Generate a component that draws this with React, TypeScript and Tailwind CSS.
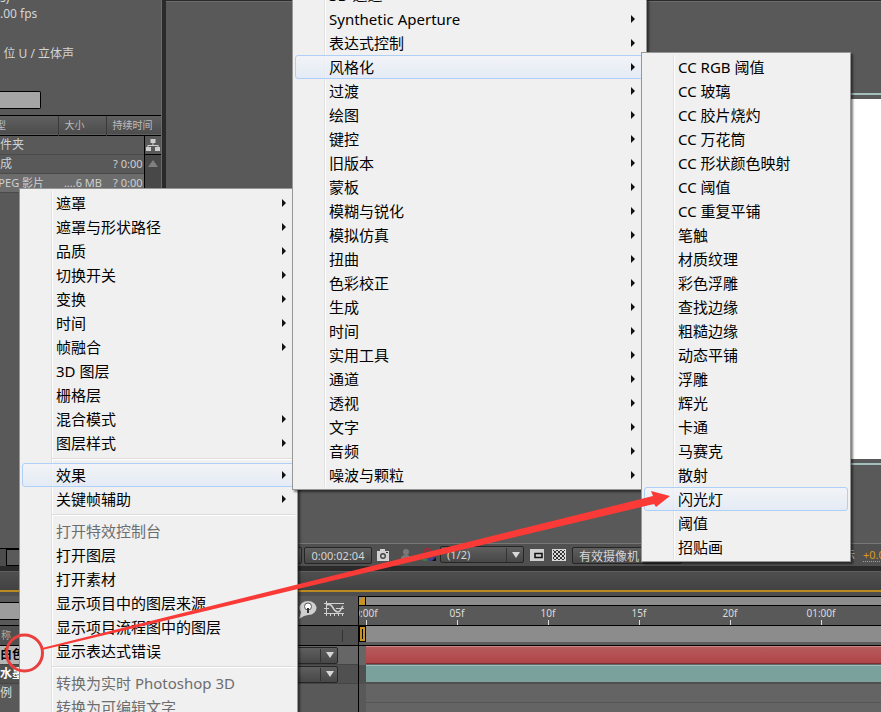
import type { ReactNode } from "react";

type TMenuEntry = {
  label?: string;
  sub?: boolean;
  active?: boolean;
  disabled?: boolean;
};

const layerMenu: TMenuEntry[] = [
  { label: "遮罩", sub: true },
  { label: "遮罩与形状路径", sub: true },
  { label: "品质", sub: true },
  { label: "切换开关", sub: true },
  { label: "变换", sub: true },
  { label: "时间", sub: true },
  { label: "帧融合", sub: true },
  { label: "3D 图层" },
  { label: "栅格层" },
  { label: "混合模式", sub: true },
  { label: "图层样式", sub: true },
  {},
  { label: "效果", sub: true, active: true },
  { label: "关键帧辅助", sub: true },
  {},
  { label: "打开特效控制台", disabled: true },
  { label: "打开图层" },
  { label: "打开素材" },
  { label: "显示项目中的图层来源" },
  { label: "显示项目流程图中的图层" },
  { label: "显示表达式错误" },
  {},
  { label: "转换为实时 Photoshop 3D", disabled: true },
  { label: "转换为可编辑文字", disabled: true },
];

const effectMenu: TMenuEntry[] = [
  "3D 通道",
  "Synthetic Aperture",
  "表达式控制",
  "风格化",
  "过渡",
  "绘图",
  "键控",
  "旧版本",
  "蒙板",
  "模糊与锐化",
  "模拟仿真",
  "扭曲",
  "色彩校正",
  "生成",
  "时间",
  "实用工具",
  "通道",
  "透视",
  "文字",
  "音频",
  "噪波与颗粒",
].map((label) => ({ label, sub: true, active: label === "风格化" }));

const stylizeMenu: TMenuEntry[] = [
  "CC RGB 阈值",
  "CC 玻璃",
  "CC 胶片烧灼",
  "CC 万花筒",
  "CC 形状颜色映射",
  "CC 阈值",
  "CC 重复平铺",
  "笔触",
  "材质纹理",
  "彩色浮雕",
  "查找边缘",
  "粗糙边缘",
  "动态平铺",
  "浮雕",
  "辉光",
  "卡通",
  "马赛克",
  "散射",
  "闪光灯",
  "阈值",
  "招贴画",
].map((label) => ({ label, active: label === "闪光灯" }));

const Menu = ({ name, items, className }: { name: string; items: TMenuEntry[]; className: string }) => {
  return (
    <div
      role="menu"
      aria-label={name}
      className={`absolute border border-[#979797] bg-[#f0f0f0] p-0.5 font-['Noto_Sans','Noto_Sans_CJK_SC',sans-serif] text-[15px] text-black shadow-[2px_2px_2px_rgba(0,0,0,0.5)] ${className}`}
    >
      {/* icon gutter line */}
      <div className="absolute inset-y-0.5 left-[31px] w-0.5 border-l border-[#e0e0e0] bg-white" />
      {items.map((item, i) =>
        item.label ? (
          <button
            key={i}
            role="menuitem"
            disabled={item.disabled}
            className={`relative flex h-6 w-full items-center justify-between rounded-[3px] border pr-2 pl-[33px] text-left leading-[22px] whitespace-nowrap disabled:text-[#6d6d6d] ${
              item.active
                ? "border-[#aecff7] bg-linear-to-b from-[#f2f4f8]/80 to-[#e2eaf6]/80"
                : "border-transparent"
            }`}
          >
            {item.label}
            {item.sub && (
              <svg className="h-2 w-1" viewBox="0 0 4 8" aria-hidden="true">
                <path d="M0 0L4 4L0 8Z" fill="#111" />
              </svg>
            )}
          </button>
        ) : (
          <div key={i} role="separator" className="flex h-2 items-center pl-[30px]">
            <div className="relative h-0.5 w-full border-t border-[#dcdcdc] bg-white" />
          </div>
        )
      )}
    </div>
  );
};

// text that runs out past the left edge of its cell
const Cut = ({ children, className }: { children: ReactNode; className: string }) => (
  <div className={`flex justify-end whitespace-nowrap ${className}`}>
    <span>{children}</span>
  </div>
);

const ProjectPanel = () => {
  return (
    <section className="flex w-[162px] shrink-0 flex-col overflow-hidden border-r border-[#6b6b6b] bg-[#595959]">
      <div className="h-[91px] shrink-0 text-[12px] leading-5 text-[#d4d4d4]">
        <div className="-mt-3 h-5">s)</div>
        <div className="-mt-1 h-5">.00 fps</div>
        <Cut className="mt-5 w-[74px]">位 U / 立体声</Cut>
      </div>
      <input
        aria-label="搜索"
        className="h-[18px] w-[41px] shrink-0 rounded-r-[2px] border border-l-0 border-black bg-[#a5a5a5]"
      />
      <div className="mt-1.5 flex border-t border-black">
        <table className="w-full table-fixed border-collapse text-[11px] leading-[18px] whitespace-nowrap text-[#d0d0d0]">
          <colgroup>
            <col className="w-[58px]" />
            <col className="w-12" />
            <col className="w-[38px]" />
            <col className="w-[17px]" />
          </colgroup>
          <thead>
            <tr className="h-[19px] border-b border-black bg-linear-to-b from-[#606060] to-[#4d4d4d] text-[10px] text-[#bdbdbd]">
              <th className="border-r border-[#3a3a3a] p-0 font-normal">
                <Cut className="w-1.5">型</Cut>
              </th>
              <th className="border-r border-[#3a3a3a] p-0 pl-1.5 text-left font-normal">大小</th>
              <th colSpan={2} className="p-0 pl-1.5 text-left font-normal">
                持续时间
              </th>
            </tr>
          </thead>
          <tbody>
            <tr className="h-[19px] border-b border-[#4a4a4a]">
              <td className="p-0 text-[12px]">
                <Cut className="w-6">件夹</Cut>
              </td>
              <td className="p-0" />
              <td className="p-0" />
              <td className="border-b border-l border-black p-0">
                <svg className="mx-auto h-3.5 w-3.5" viewBox="0 0 14 14" fill="#cfcfcf" aria-hidden="true">
                  <path d="M4.500 1h5v4h-2v2h5v2H14v4H9V9h2.500V8h-9v1H5v4H0V9h1.500V7h5V5h-2z" />
                </svg>
              </td>
            </tr>
            <tr className="h-[19px] border-b border-[#4a4a4a]">
              <td className="p-0 text-[12px]">
                <Cut className="w-3">成</Cut>
              </td>
              <td className="p-0" />
              <td className="p-0 pr-px text-right">? 0:00</td>
              <td rowSpan={2} className="border-l border-black bg-[#484848] p-0 pt-1 align-top">
                <svg className="mx-auto h-2 w-2.5" viewBox="0 0 10 8" aria-hidden="true">
                  <path d="M5 1L10 8H0Z" fill="#808080" />
                </svg>
              </td>
            </tr>
            <tr className="h-[19px] border-b border-[#4a4a4a] bg-[#6c6c6c]">
              <td className="p-0">
                <Cut className="w-11">PEG 影片</Cut>
              </td>
              <td className="p-0 pr-1 text-right">....6 MB</td>
              <td className="p-0 pr-px text-right">? 0:00</td>
            </tr>
          </tbody>
        </table>
      </div>
      <div className="mt-auto flex h-[18px] border-t border-black bg-[#4c4c4c]">
        <button aria-label="新建合成" className="ml-1.5 w-8 border border-black bg-[#5a5a5a]" />
      </div>
    </section>
  );
};

const barButton = "h-[17px] rounded-[2px] border border-[#262626] bg-linear-to-b from-[#5f5f5f] to-[#474747]";

const CompPanel = () => {
  return (
    <section className="flex min-w-0 flex-1 flex-col border-t border-[#2b2b2b] bg-[#595959]">
      <div className="h-[92px] shrink-0 border-t border-[#6b6b6b]" />
      <div className="ml-[300px] min-h-0 flex-1 border-y-2 border-[#a3bfbb] py-1">
        <div className="h-full bg-white" />
      </div>
      <div className="h-[78px] shrink-0" />
      <div className="flex h-[23px] shrink-0 items-center border-t border-[#777] bg-[#505050] pl-[126px] text-[11px] whitespace-nowrap text-[#d6d6d6]">
        <button aria-label="网格" className={`w-2.5 ${barButton}`} />
        <button className={`ml-0.5 w-[68px] ${barButton}`}>0:00:02:04</button>
        <button aria-label="快照" className="ml-1">
          <svg className="h-3.5 w-3.5" viewBox="0 0 14 14" aria-hidden="true">
            <path d="M1 3h3V1h5v2h4v10H1z" fill="#d2d2d2" />
            <circle cx="7" cy="8" r="3" fill="#444" />
            <circle cx="7" cy="8" r="1.6" fill="#d2d2d2" />
            <path d="M10 4h2v1h-2z" fill="#333" />
          </svg>
        </button>
        <svg className="ml-2.5 h-3.5 w-3" viewBox="0 0 12 14" fill="#797979" aria-hidden="true">
          <circle cx="6" cy="4" r="3" />
          <path d="M1 13V9l3-2h4l3 2v4z" />
        </svg>
        <svg className="ml-2 h-3.5 w-4" viewBox="0 0 16 14" fill="none" strokeWidth="2" aria-hidden="true">
          <circle cx="5" cy="9" r="3" stroke="#3f7a4a" />
          <circle cx="11" cy="9" r="3" stroke="#3c3c9c" />
          <circle cx="8" cy="5" r="4" stroke="#a02c38" />
          <path d="M12 13h4v-4z" fill="#111" />
        </svg>
        <div className="relative ml-1">
          <select aria-label="分辨率" className={`w-[84px] appearance-none pl-1.5 ${barButton}`}>
            <option>(1/2)</option>
          </select>
          <DownArrow />
        </div>
        <svg className="ml-1.5 h-3 w-3.5" viewBox="0 0 14 12" aria-hidden="true">
          <path d="M0 0h14v12H0z" fill="#cfcfcf" />
          <path d="M5 4.5h7v4H5z" fill="#cfcfcf" stroke="#111" strokeWidth="1.6" />
        </svg>
        <svg className="ml-2 h-3 w-3.5" viewBox="0 0 14 12" aria-hidden="true">
          <defs>
            <pattern id="checker" width="4" height="4" patternUnits="userSpaceOnUse">
              <path d="M0 0h2v2H0zM2 2h2v2H2z" fill="#333" />
            </pattern>
          </defs>
          <path d="M0 0h14v12H0z" fill="#d8d8d8" />
          <path d="M1 1h12v10H1z" fill="url(#checker)" />
        </svg>
        <select aria-label="视图" className={`ml-1.5 w-[110px] appearance-none pl-1.5 text-[12px] ${barButton}`}>
          <option>有效摄像机</option>
        </select>
        <span className="mr-2 ml-auto">显示</span>
        <a href="#exposure" className="w-[18px] shrink-0 text-[#d99b1c] underline decoration-dotted underline-offset-2">
          +0.0
        </a>
      </div>
    </section>
  );
};

const DownArrow = () => (
  <span className="pointer-events-none absolute inset-y-[2px] right-0 flex w-[18px] items-center justify-center border-l border-[#333]">
    <svg className="h-1.5 w-2" viewBox="0 0 8 6" aria-hidden="true">
      <path d="M0 0H8L4 6Z" fill="#d8d8d8" />
    </svg>
  </span>
);

const ModeSelect = ({ name }: { name: string }) => (
  <div className="relative">
    <select aria-label={name} className={`block w-[60px] appearance-none ${barButton}`} />
    <DownArrow />
  </div>
);

const ticks = ["0:00f", "05f", "10f", "15f", "20f", "01:00f"];

const TimelinePanel = () => {
  return (
    <section className="shrink-0 border-t-[5px] border-[#2a2a2a] bg-[#595959]">
      <div className="h-[19px] border-t border-[#5e5e5e] bg-linear-to-b from-[#4f4f4f] to-[#424242]" />
      <div className="h-[6px] border-t-2 border-[#b98a20] bg-[#4e4e4e]" />
      <div className="flex">
        {/* layer list */}
        <div className="w-[358px] shrink-0">
          <div className="flex h-[30px] items-center border-b border-black">
            <input aria-label="搜索图层" className="h-[18px] w-[120px] border-y border-black bg-[#9c9c9c]" />
            <button aria-label="头脑风暴" className="mb-1 ml-auto">
              <svg className="h-5 w-5" viewBox="0 0 20 20" aria-hidden="true">
                <path d="M3 13a8.500 7 0 1 1 7 3l-4 1l-5 3z" fill="#d0d0d0" />
                <circle cx="10" cy="7.500" r="3.500" fill="#fff" stroke="#555" />
                <path d="M9 9h2v5H9z" fill="#333" />
              </svg>
            </button>
            <button aria-label="图表编辑器" className="mr-3.5 mb-1 ml-1.5">
              <svg className="h-4 w-5" viewBox="0 0 20 16" fill="none" stroke="#d0d0d0" aria-hidden="true">
                <path d="M0 2.500H20M0 12.500H20M2.500 0V15M0 7.500H5M12 7.500H20M6.500 12v3M10.500 12v3M14.500 12v3M18.500 12v3" />
                <path d="M2 4c8-3 6 7 12 7c3 0 3-4 5-6" strokeWidth="1.600" />
              </svg>
            </button>
          </div>
          <div className="flex h-[20px] items-center border-b border-black bg-[#505050] text-[10px] text-[#aaa]">
            <Cut className="w-[11px]">称</Cut>
            <span className="mr-[15px] ml-auto h-3 border-l border-[#333]" />
          </div>
          <div className="flex h-[19px] items-center justify-between border-b border-[#444] bg-[#666] pr-[20px]">
            <div className="w-[120px] bg-[#b5b5b5] text-[12px] leading-[18px] font-bold text-black">白色</div>
            <ModeSelect name="白色 模式" />
          </div>
          <div className="flex h-[19px] items-center justify-between border-b border-[#444] bg-[#505050] pr-[20px]">
            <div className="text-[12px] leading-[18px] font-bold text-white">水墨</div>
            <ModeSelect name="水墨 模式" />
          </div>
          <div className="h-[28px] text-[12px] leading-[18px] text-[#ddd]">例</div>
        </div>
        {/* time ruler and layer bars */}
        <div className="min-w-0 flex-1 overflow-hidden border-l border-black">
          <div className="flex h-[10px] border-y border-black bg-[#8c8c8c]">
            <span className="w-[7px] rounded-tl-md border-r border-black bg-[#c99322]" />
          </div>
          <div className="h-[20px] border-b border-black pl-[7px]">
            <div className="flex">
              {ticks.map((tick) => (
                <div key={tick} className="flex h-[19px] w-[91px] shrink-0 flex-col text-[10px] leading-[14px] text-[#dcdcdc]">
                  <span className="flex w-0 justify-center whitespace-nowrap">{tick}</span>
                  <span className="h-[5px] w-px bg-[#ddd]" />
                </div>
              ))}
            </div>
          </div>
          <div className="flex h-[16px] bg-[#8c8c8c]">
            <span className="flex w-[7px] justify-center border border-black bg-[#c99322] py-0.5">
              <span className="w-px bg-black" />
            </span>
          </div>
          <div className="h-[4px] border-b border-black bg-[#5c5c5c]" />
          <div className="h-[19px] bg-[#666] pl-[7px]">
            <div className="h-[18px] border-t border-b border-t-[#c98a8a] border-b-[#7d2c30] bg-linear-to-b from-[#b65a5c] to-[#b04548]" />
          </div>
          <div className="h-[19px] bg-[#505050] pl-[7px]">
            <div className="h-[17px] border-t border-[#9cbfba] bg-[#7ba19c]" />
          </div>
          <div className="pl-[7px]">
            <div className="h-[19px] border-b border-[#555] bg-[#646464]" />
            <div className="h-[9px] bg-[#646464]" />
          </div>
        </div>
      </div>
    </section>
  );
};

const App = () => {
  return (
    <main className="relative flex h-screen flex-col overflow-hidden bg-[#2a2a2a] font-['Noto_Sans','Noto_Sans_CJK_SC',sans-serif]">
      <div className="flex min-h-0 flex-1 gap-1">
        <ProjectPanel />
        <CompPanel />
      </div>
      <TimelinePanel />

      {/* cascading context menus */}
      <Menu name="图层" items={layerMenu} className="top-[188px] left-[19px] w-[279px]" />
      <Menu name="效果" items={effectMenu} className="-top-5 left-[292px] w-[355px]" />
      <Menu name="风格化" items={stylizeMenu} className="top-[52px] left-[641px] w-[210px]" />

      {/* arrow from the layer to the effect */}
      <svg
        className="pointer-events-none absolute top-0 left-0 h-[712px] w-[881px]"
        viewBox="0 0 881 712"
        aria-hidden="true"
      >
        <circle cx="24.500" cy="653" r="18" fill="none" stroke="#e8403e" strokeWidth="3" />
        <path d="M42 648L653 496L651 491L670 496L656 507L654 504L42 650Z" fill="#f93a37" />
      </svg>
    </main>
  );
};

export default App;
